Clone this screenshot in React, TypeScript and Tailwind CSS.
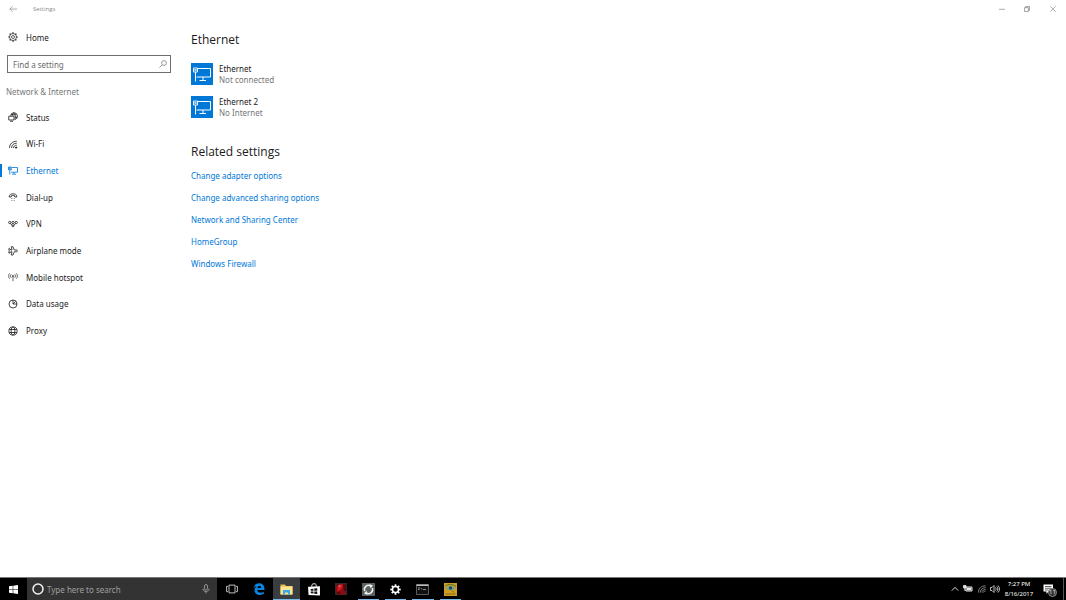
import type { ReactNode } from 'react';

type IconProps = { children: ReactNode; className?: string };

function Line({ children, className = 'size-[10px]' }: IconProps) {
  return (
    <svg
      viewBox="0 0 20 20"
      className={`shrink-0 ${className}`}
      fill="none"
      stroke="currentColor"
      strokeWidth="1.6"
      aria-hidden="true"
    >
      {children}
    </svg>
  );
}

const teeth = [0, 45, 90, 135, 180, 225, 270, 315];

const nav: { label: string; icon: ReactNode }[] = [
  {
    label: 'Status',
    icon: (
      <Line>
        <path d="M5 7.500A7 7 0 1 1 14.500 15M6 5.500h11M11.500 1.500c-2 2-3 4-3 6M11.500 1.500c3 3 4 8 2.500 13.500M14 10.500h4.500" />
        <path d="M1.500 8.500h10.500v7.500h-10.500zM4 18.500h6" />
      </Line>
    ),
  },
  {
    label: 'Wi-Fi',
    icon: (
      <Line>
        <path d="M3 18C3 10 9 4.500 17.500 4.500M7 18c0-5.500 4-9.500 10.500-9.500M11 18c0-3.500 2.500-5.500 6.500-5.500" />
        <path d="M14.500 18c0-1.500 1-2 3-2v2z" fill="currentColor" />
      </Line>
    ),
  },
  {
    label: 'Ethernet',
    icon: (
      <Line>
        <path d="M8 3h11v9.500H6M12 12.500V16M8 16.500h8M3.500 7.500V17" />
        <path d="M1 2h5.500v5.500H1zM1 2l5.500 5.500M6.500 2L1 7.500" />
      </Line>
    ),
  },
  {
    label: 'Dial-up',
    icon: (
      <Line>
        <path d="M2.500 8.500c0-6.500 15-6.500 15 0v1.500h-4V7.500c-2-1-5-1-7 0V10h-4z" />
        <path d="M7 12v1.500M10 12v1.500M13 12v1.500M7 16v1.500M10 16v1.500M13 16v1.500" strokeOpacity=".6" />
      </Line>
    ),
  },
  {
    label: 'VPN',
    icon: (
      <Line>
        <circle cx="3.500" cy="7" r="2.300" />
        <circle cx="10" cy="7" r="2.300" />
        <circle cx="16.500" cy="7" r="2.300" />
        <circle cx="10" cy="13.500" r="2" />
        <path d="M4.500 9l4 3.500M15.500 9l-4 3.500" />
      </Line>
    ),
  },
  {
    label: 'Airplane mode',
    icon: (
      <Line>
        <path d="M1.500 5.500h2.500l1.500 2.500H8L6.500 1.500h3.500L12.500 8H17c2.500 0 2.500 3.500 0 3.500h-4.500L10 18H6.500l1.500-6.500H5.500L4 14H1.500l1-4.300z" />
      </Line>
    ),
  },
  {
    label: 'Mobile hotspot',
    icon: (
      <Line>
        <path d="M3.500 2.500c-3 3-3 8 0 11M6.500 4.500c-2 2-2 5 0 7M16.500 2.500c3 3 3 8 0 11M13.500 4.500c2 2 2 5 0 7M10 9v9.500" strokeOpacity=".8" />
        <circle cx="10" cy="8" r="1.200" />
      </Line>
    ),
  },
  {
    label: 'Data usage',
    icon: (
      <Line>
        <circle cx="10" cy="10" r="8" />
        <path d="M10 2v8h8M10 10l5.500-5.500" />
      </Line>
    ),
  },
  {
    label: 'Proxy',
    icon: (
      <Line>
        <circle cx="10" cy="10" r="8.200" />
        <ellipse cx="10" cy="10" rx="3.800" ry="8.200" />
        <path d="M2.500 7h15M2.500 13h15" />
      </Line>
    ),
  },
];

const adapters = [
  { name: 'Ethernet', state: 'Not connected' },
  { name: 'Ethernet 2', state: 'No Internet' },
];

const related = [
  'Change adapter options',
  'Change advanced sharing options',
  'Network and Sharing Center',
  'HomeGroup',
  'Windows Firewall',
];

const apps: { label: string; running?: boolean; active?: boolean; icon: ReactNode }[] = [
  {
    label: 'Task view',
    icon: (
      <Line className="size-3 text-[#c8c8c8]">
        <path d="M5 3.500h10v13H5zM3.500 5.500H1v9h2.500M16.500 5.500H19v9h-2.500" />
      </Line>
    ),
  },
  {
    label: 'Microsoft Edge',
    icon: (
      <svg viewBox="0 0 20 20" className="size-3" aria-hidden="true">
        <path
          fill="#0a84e0"
          d="M.8 9C1.600 3.500 5.300.5 10.200.5c5.300 0 8.800 3.700 8.800 9v2.300H7.200c.2 3 2.500 4.300 5.200 4.300 2 0 3.900-.6 5.600-1.600v4c-1.800.9-4 1.400-6.300 1.400-5.300 0-9.100-3-9.100-8 0-3.300 1.700-5.700 4.500-7C4.500 5.400 2.300 6.600.8 9zm6.500-.7h6.400c0-2-1.100-3.300-3-3.300-1.900 0-3.100 1.300-3.400 3.300z"
        />
      </svg>
    ),
  },
  {
    label: 'File Explorer',
    running: true,
    active: true,
    icon: (
      <svg viewBox="0 0 24 22" className="h-[11px] w-[13px]" aria-hidden="true">
        <path fill="#e8b84a" d="M0 1h9l2 3h13v17H0z" />
        <path fill="#fbe391" d="M0 5h24v16H0z" />
        <path fill="#39a9e6" d="M5 12h14v9h-4v-4H9v4H5z" />
      </svg>
    ),
  },
  {
    label: 'Store',
    icon: (
      <svg viewBox="0 0 22 24" className="h-[13px] w-3" aria-hidden="true">
        <path fill="none" stroke="#fff" strokeWidth="1.800" d="M7 7V4c0-3 8-4 8 0v3" />
        <path fill="#fff" d="M0 7l22-1v17L1 22z" />
        <path fill="#111" d="M5 11l5-.6v4H5zM11.500 10.300l5.500-.6v4.700h-5.500zM5 15.600h5v4L5 19zM11.500 15.600H17v4.700l-5.500-.6z" />
      </svg>
    ),
  },
  {
    label: 'Red application',
    icon: (
      <svg viewBox="0 0 24 24" className="size-3" aria-hidden="true">
        <path fill="#33282a" d="M0 0h24v24H0z" />
        <path fill="#8d0c12" d="M3 5l10-4 9 3-3 12 4 7H4L1 18z" />
        <path fill="#d81c26" d="M5 6l7-4 4 4-4 7-7 3z" />
        <path fill="#4a0b0d" d="M16 3h7v13h-5zM3 19l9-1-3 4H4z" />
        <path fill="#f26a6a" d="M8 5l3-1-1 4H7z" />
      </svg>
    ),
  },
  {
    label: 'Sync',
    running: true,
    icon: (
      <svg viewBox="0 0 26 26" className="size-[13px]" aria-hidden="true">
        <path fill="#5b5f5f" d="M0 0h26v26H0z" />
        <path fill="none" stroke="#f1f1f1" strokeWidth="3" d="M5.500 16A8 8 0 0 1 17 6M20.500 10A8 8 0 0 1 9 20" />
        <path fill="#f1f1f1" d="M15 2l7 3-5 6zM11 24l-7-3 5-6z" />
      </svg>
    ),
  },
  {
    label: 'Settings',
    running: true,
    icon: (
      <Line className="size-[11px] text-white">
        <circle cx="10" cy="10" r="5.500" strokeWidth="2.800" />
        {teeth.map((deg) => (
          <path key={deg} d="M10 .5v3.500" strokeWidth="3.200" transform={`rotate(${deg} 10 10)`} />
        ))}
      </Line>
    ),
  },
  {
    label: 'Command Prompt',
    running: true,
    icon: (
      <svg viewBox="0 0 26 22" className="h-[11px] w-[13px]" aria-hidden="true">
        <path fill="#111" stroke="#777" strokeWidth="1.500" d="M1 1h24v20H1z" />
        <path fill="#b9bcbd" d="M1 1h24v3H1z" />
        <path fill="none" stroke="#b5b5b5" strokeWidth="1.500" d="M4 8h4M4 11h3M10 8l2 3M14 11h6" />
      </svg>
    ),
  },
  {
    label: 'Eye application',
    running: true,
    icon: (
      <svg viewBox="0 0 26 26" className="size-[13px]" aria-hidden="true">
        <path fill="#d09d22" d="M0 0h26v26H0z" />
        <path fill="#7fa08a" d="M2 10C7 5 18 4 24 10c-5 6-16 6-22 0z" />
        <path fill="none" stroke="#51702b" strokeWidth="2" d="M2 6c6-4 16-4 22 1M16 15l4 4" />
        <circle cx="13" cy="10" r="3.500" fill="#174e64" />
        <path fill="#8a6814" d="M3 21h20v2H3z" />
      </svg>
    ),
  },
];

function AdapterIcon() {
  return (
    <span className="flex size-[22px] shrink-0 items-center justify-center bg-[#0078d7] text-white">
      <svg viewBox="0 0 44 44" className="size-[22px]" fill="none" stroke="currentColor" strokeWidth="2" aria-hidden="true">
        <path d="M14 11h25v17H11M24 28v6M17 35h13M9 18v19" />
        <path d="M5 10h8v8H5zM7 12l4 4M11 12l-4 4" strokeWidth="1.800" />
      </svg>
    </span>
  );
}

function TitleBar() {
  return (
    <header className="flex h-[18px] shrink-0 items-center justify-between text-[#8a8a8a]">
      <div className="flex items-center gap-[15px] pl-[9px]">
        <button type="button" aria-label="Back" className="flex">
          <Line className="size-[9px]">
            <path d="M18 9H2M8 3L2 9l6 6" />
          </Line>
        </button>
        <span className="font-['Open_Sans'] text-[6px]">Settings</span>
      </div>
      <div className="flex h-full">
        <button type="button" aria-label="Minimize" className="flex w-[25px] items-center justify-center">
          <Line className="size-[6px]">
            <path d="M0 11h20" strokeWidth="2.400" />
          </Line>
        </button>
        <button type="button" aria-label="Restore" className="flex w-[26px] items-center justify-center">
          <Line className="size-[6px]">
            <path d="M1.500 5.500h13v13h-13zM5.500 5V1.500h13v13H15" strokeWidth="2.600" />
          </Line>
        </button>
        <button type="button" aria-label="Close" className="flex w-[26px] items-center justify-center">
          <Line className="size-[6px]">
            <path d="M1 1l18 18M19 1L1 19" strokeWidth="2.200" />
          </Line>
        </button>
      </div>
    </header>
  );
}

function Sidebar() {
  return (
    <aside className="flex w-[178px] shrink-0 flex-col">
      <a href="#home" className="mt-[7px] flex h-6 items-center gap-2 pl-2">
        <Line>
          <circle cx="10" cy="10" r="7" strokeWidth="1.400" />
          <circle cx="10" cy="10" r="3" strokeWidth="1.400" />
          {teeth.map((deg) => (
            <path key={deg} d="M10 .6v2.400" strokeWidth="2.400" transform={`rotate(${deg} 10 10)`} />
          ))}
        </Line>
        Home
      </a>
      <label className="mt-[6px] mr-[7px] ml-[7px] flex h-[18px] items-center border border-[#6e6e6e] pr-[3px] pl-[5px] text-[#666]">
        <input
          type="search"
          aria-label="Find a setting"
          placeholder="Find a setting"
          className="min-w-0 flex-1 bg-transparent outline-none placeholder:text-[#6a6a6a]"
        />
        <Line className="size-2">
          <circle cx="12.500" cy="7.500" r="6" />
          <path d="M8 12l-7 7" />
        </Line>
      </label>
      <h2 className="mt-[13px] pl-[6px] leading-3 text-[#777]">Network &amp; Internet</h2>
      <nav className="mt-[6px] grid h-60 grid-rows-9">
        {nav.map(({ label, icon }) => {
          const current = label === 'Ethernet';
          return (
            <a
              key={label}
              href={`#${label.toLowerCase().replace(' ', '-')}`}
              aria-current={current ? 'page' : undefined}
              className={`flex items-center ${current ? 'text-[#0078d7]' : ''}`}
            >
              <span className={`mr-[6px] h-[13px] w-[2px] ${current ? 'bg-[#0078d7]' : ''}`} />
              <span className="mr-2 flex">{icon}</span>
              {label}
            </a>
          );
        })}
      </nav>
    </aside>
  );
}

function Taskbar() {
  return (
    <footer className="flex h-[23px] shrink-0 items-stretch border-t border-[#777] bg-black text-white">
      <button type="button" aria-label="Start" className="flex w-[27px] items-center justify-center">
        <svg viewBox="0 0 18 18" className="size-[9px]" fill="currentColor" aria-hidden="true">
          <path d="M0 2.500L7.500 1.500v7H0zM8.500 1.300L18 0v8.500H8.500zM0 9.500h7.500v7L0 15.500zM8.500 9.500H18V18l-9.500-1.300z" />
        </svg>
      </button>
      <label className="flex w-[190px] items-center gap-[3px] bg-[#333] pr-[6px] pl-[5px]">
        <svg viewBox="0 0 24 24" className="size-3 shrink-0" fill="none" stroke="#f2f2f2" strokeWidth="3" aria-hidden="true">
          <circle cx="12" cy="12" r="10" />
        </svg>
        <input
          type="search"
          aria-label="Type here to search"
          placeholder="Type here to search"
          className="min-w-0 flex-1 bg-transparent outline-none placeholder:text-[#a0a0a0]"
        />
        <Line className="size-[10px] text-[#a8a8a8]">
          <rect x="7" y="1" width="6" height="11" rx="3" />
          <path d="M4 9v2c0 5 12 5 12 0V9M10 15v4" />
        </Line>
      </label>
      <div className="ml-px grid w-[246px] grid-cols-9">
        {apps.map(({ label, icon, running, active }) => (
          <button
            key={label}
            type="button"
            aria-label={label}
            className={`relative flex items-center justify-center ${active ? 'bg-[#3a3d40]' : ''}`}
          >
            {icon}
            {running && (
              <span className={`absolute bottom-0 h-px bg-[#76b9ed] ${active ? 'inset-x-0' : 'inset-x-[3px]'}`} />
            )}
          </button>
        ))}
      </div>
      <div className="ml-auto flex items-center text-[#e6e6e6]">
        <button type="button" aria-label="Show hidden icons" className="flex w-[13px] justify-center">
          <Line className="size-2">
            <path d="M2 14l8-8 8 8" strokeWidth="2.400" />
          </Line>
        </button>
        <button type="button" aria-label="Battery" className="flex w-[14px] justify-center">
          <Line>
            <path d="M6 6h12v8H6z" strokeWidth="2" />
            <path d="M8 8h8v4H8zM1 3h5v5H1z" fill="currentColor" />
            <path d="M3.500 8v5H6" />
          </Line>
        </button>
        <button type="button" aria-label="Wi-Fi" className="flex w-[13px] justify-center">
          <Line className="size-2 text-[#c5c5c5]">
            <path d="M1 19C1 9 8 2 19 2M5.500 19c0-7 6-12.500 13.500-12.500M10 19c0-5 4-8 9-8M14 19c0-3 2-4 5-4" />
          </Line>
        </button>
        <button type="button" aria-label="Volume" className="flex w-[13px] justify-center">
          <Line>
            <path d="M1 7h3l4-4v14l-4-4H1zM11 7c1.500 2 1.500 4 0 6M13.500 5c3 3 3 7 0 10M16 3c4 4 4 10 0 14" />
          </Line>
        </button>
        <time dateTime="2017-08-16T19:27" className="w-9 text-center text-[6px] leading-[10px] text-white">
          7:27 PM
          <br />
          8/16/2017
        </time>
        <button type="button" aria-label="Notifications, 11 new" className="relative mr-2 ml-[6px] flex">
          <svg viewBox="0 0 24 22" className="h-[11px] w-3" aria-hidden="true">
            <path fill="#fff" d="M1 1h19v14h-9l-4 5v-5H1z" />
            <path stroke="#333" strokeWidth="1.500" d="M4 5h13M4 8.500h13M4 12h7" />
          </svg>
          <span className="absolute top-[4px] left-[5px] flex size-[9px] items-center justify-center rounded-full border border-[#8a8a8a] bg-[#333] text-[6px] leading-none">
            11
          </span>
        </button>
        <button type="button" aria-label="Show desktop" className="h-full w-[3px] border-l border-[#555]" />
      </div>
    </footer>
  );
}

export default function App() {
  return (
    <div className="flex min-h-screen flex-col bg-white font-['Noto_Sans','Open_Sans',sans-serif] text-[8px] leading-[11px] text-[#1a1a1a]">
      <TitleBar />
      <div className="flex flex-1">
        <Sidebar />
        <main className="flex-1 pt-[13px] pl-[13px]">
          <h1 className="font-['Open_Sans'] text-[12px] leading-[18px]">Ethernet</h1>
          <ul className="mt-[14px] flex flex-col gap-[11px]">
            {adapters.map(({ name, state }) => (
              <li key={name}>
                <button type="button" className="flex items-center gap-[6px] text-left">
                  <AdapterIcon />
                  <span className="flex flex-col">
                    <span>{name}</span>
                    <span className="text-[#777]">{state}</span>
                  </span>
                </button>
              </li>
            ))}
          </ul>
          <h2 className="mt-[25px] font-['Open_Sans'] text-[12px] leading-[18px]">Related settings</h2>
          <ul className="mt-[3px] grid h-[111px] grid-rows-5">
            {related.map((label) => (
              <li key={label} className="flex items-center">
                <a href="#related" className="text-[#0078d7]">
                  {label}
                </a>
              </li>
            ))}
          </ul>
        </main>
      </div>
      <Taskbar />
    </div>
  );
}
